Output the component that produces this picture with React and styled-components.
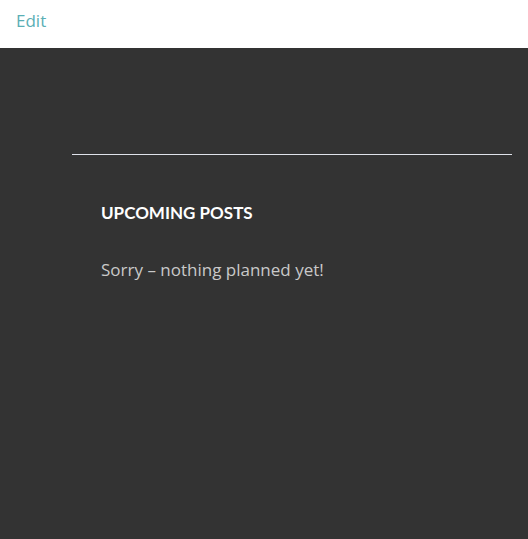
import React from 'react'
import styled, {createGlobalStyle} from 'styled-components'

const Global = createGlobalStyle`
    html, body {
        margin: 0;
        padding: 0;
        background: #333333;
    }
`

const TopBar = styled.div`
    height: 48px;
    background: #ffffff;
    display: flex;
    align-items: center;
    padding-left: 16px;
    box-sizing: border-box;
`

const EditLink = styled.a`
    font-family: "Open Sans", "Noto Sans", sans-serif;
    font-size: 17px;
    color: #5aafb5;
    text-decoration: none;
    margin-top: -7px;
`

const Main = styled.div`
    background: #333333;
    min-height: 491px;
    padding: 106px 16px 0 72px;
    box-sizing: border-box;
`

const Widget = styled.section`
    border-top: 1px solid #dfe2ea;
    padding: 48px 0 0 29px;
`

const Title = styled.h2`
    margin: 0;
    font-family: Lato, sans-serif;
    font-weight: 700;
    font-size: 17px;
    line-height: 20px;
    color: #ffffff;
    text-transform: uppercase;
`

const Message = styled.p`
    margin: 35px 0 0;
    font-family: "Open Sans", "Noto Sans", sans-serif;
    font-size: 17px;
    line-height: 24px;
    color: #c9c9c9;
`

const App = ()=> {
    return (
        <>
            <Global />
            <TopBar>
                <EditLink href="#">Edit</EditLink>
            </TopBar>
            <Main>
                <Widget>
                    <Title>Upcoming Posts</Title>
                    <Message>Sorry – nothing planned yet!</Message>
                </Widget>
            </Main>
        </>
    )
}

export default App
